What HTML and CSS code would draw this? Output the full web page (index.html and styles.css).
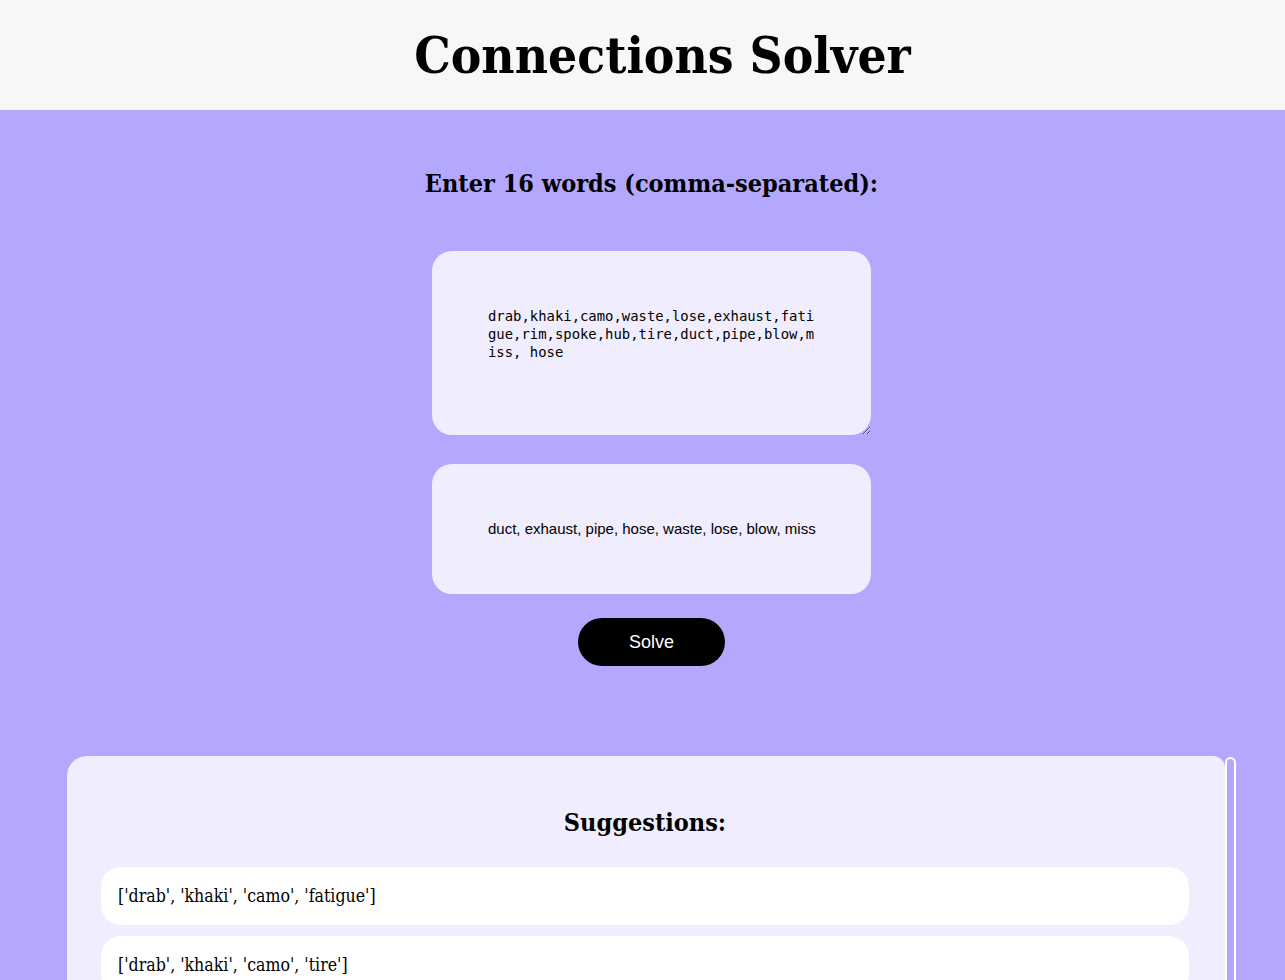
FILE: index.html
```html
<!DOCTYPE html>
<html lang="en">
<head>
<meta charset="utf-8">
<title>Connections Solver</title>
<link rel="stylesheet" href="styles.css">
</head>
<body>
<header class="site-header">
  <h1 class="site-title">Connections Solver</h1>
</header>
<main class="main">
  <h2 class="prompt">Enter 16 words (comma-separated):</h2>
  <textarea class="words-input" rows="4">drab,khaki,camo,waste,lose,exhaust,fatigue,rim,spoke,hub,tire,duct,pipe,blow,miss, hose</textarea>
  <div class="selected-box">duct, exhaust, pipe, hose, waste, lose, blow, miss</div>
  <button class="solve-btn" type="button">Solve</button>
  <div class="suggestions-wrap">
    <section class="suggestions">
      <h2 class="suggestions-title">Suggestions:</h2>
      <ul class="suggestion-list">
        <li class="suggestion">['drab', 'khaki', 'camo', 'fatigue']</li>
        <li class="suggestion">['drab', 'khaki', 'camo', 'tire']</li>
        <li class="suggestion">['rim', 'spoke', 'hub', 'tire']</li>
        <li class="suggestion">['duct', 'pipe', 'hose', 'exhaust']</li>
      </ul>
    </section>
    <div class="scrollbar"><div class="scroll-thumb"></div></div>
  </div>
</main>
</body>
</html>
```

FILE: styles.css
```css
* { box-sizing: border-box; }
html, body { margin: 0; padding: 0; }
body {
  background: #b4a8fe;
  font-family: "DejaVu Serif", serif;
  color: #000;
  height: 980px;
  overflow: hidden;
}
.site-header {
  background: #f7f7f7;
  height: 110px;
  display: flex;
  align-items: center;
  justify-content: center;
  padding-left: 40px;
}
.site-title {
  margin: 0;
  font-family: "DejaVu Serif", serif;
  font-stretch: condensed;
  font-weight: 700;
  font-size: 51px;
}
.main {
  padding-left: 18px;
  display: flex;
  flex-direction: column;
  align-items: center;
}
.prompt {
  margin: 0;
  margin-top: 58px;
  height: 32px;
  font-stretch: condensed;
  font-size: 25px;
  font-weight: 700;
  line-height: 32px;
}
.words-input {
  margin-top: 51px;
  width: 439px;
  height: 184px;
  padding: 56px;
  border: none;
  border-radius: 20px;
  background: #f0edfe;
  font-family: "DejaVu Sans Mono", monospace;
  font-size: 13.9px;
  line-height: 18px;
  color: #000;
  resize: vertical;
  outline: none;
  display: block;
}
.selected-box {
  margin-top: 29px;
  width: 439px;
  height: 130px;
  padding: 56px 40px 56px 56px;
  border-radius: 20px;
  background: #f0edfe;
  font-family: "Liberation Sans", Arial, sans-serif;
  font-size: 15px;
  line-height: 18px;
}
.solve-btn {
  margin-top: 24px;
  width: 147px;
  height: 48px;
  border: none;
  border-radius: 24px;
  background: #000;
  color: #fff;
  font-family: "Liberation Sans", Arial, sans-serif;
  font-size: 18px;
}
.suggestions-wrap {
  margin-top: 90px;
  width: 1169px;
  display: flex;
  align-items: flex-start;
}
.suggestions {
  flex: 1;
  background: #f0edfe;
  border-radius: 20px 12px 0 0;
  padding: 0 36px 20px 34px;
  min-height: 400px;
}
.scrollbar {
  width: 11px;
  height: 400px;
  padding-top: 1px;
}
.scroll-thumb {
  height: 100%;
  background: #b4a8fe;
  border: 2px solid #fff;
  border-radius: 6px;
}
.suggestions-title {
  margin: 0;
  padding-top: 50px;
  height: 111px;
  text-align: center;
  font-stretch: condensed;
  font-size: 25px;
  font-weight: 700;
  line-height: 34px;
}
.suggestion-list {
  list-style: none;
  margin: 0;
  padding: 0;
  display: flex;
  flex-direction: column;
  gap: 11px;
}
.suggestion {
  background: #fff;
  border-radius: 20px;
  height: 58px;
  display: flex;
  align-items: center;
  padding-left: 17px;
  font-size: 17.6px;
  font-stretch: condensed;
}
```
